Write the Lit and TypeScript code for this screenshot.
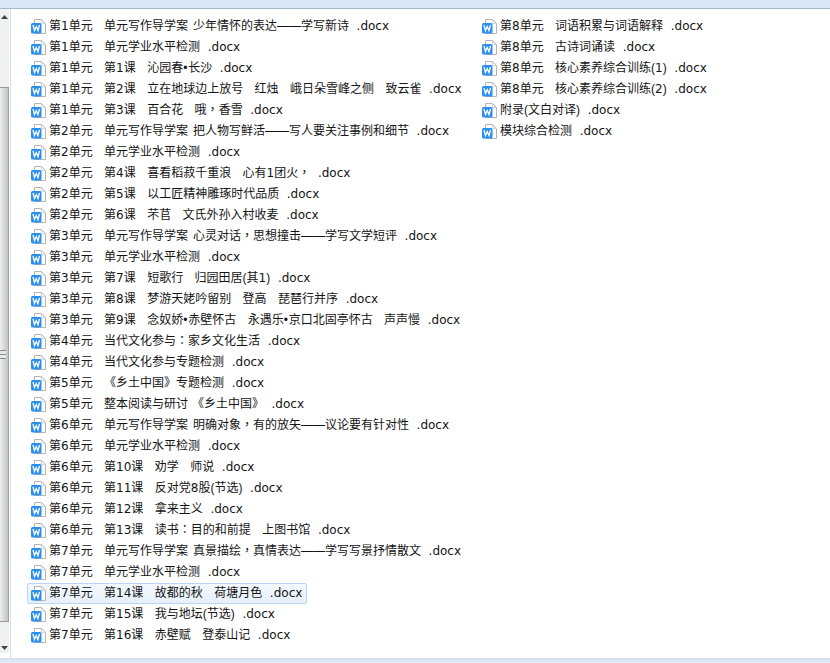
import { LitElement, html, css } from "lit";
import { customElement } from "lit/decorators.js";

const col1 = [
  "第1单元   单元写作导学案 少年情怀的表达——学写新诗  .docx",
  "第1单元   单元学业水平检测  .docx",
  "第1单元   第1课   沁园春•长沙  .docx",
  "第1单元   第2课   立在地球边上放号   红烛   峨日朵雪峰之侧   致云雀  .docx",
  "第1单元   第3课   百合花   哦，香雪  .docx",
  "第2单元   单元写作导学案 把人物写鲜活——写人要关注事例和细节  .docx",
  "第2单元   单元学业水平检测  .docx",
  "第2单元   第4课   喜看稻菽千重浪   心有1团火，  .docx",
  "第2单元   第5课   以工匠精神雕琢时代品质  .docx",
  "第2单元   第6课   芣苢   文氏外孙入村收麦  .docx",
  "第3单元   单元写作导学案 心灵对话，思想撞击——学写文学短评  .docx",
  "第3单元   单元学业水平检测  .docx",
  "第3单元   第7课   短歌行   归园田居(其1)  .docx",
  "第3单元   第8课   梦游天姥吟留别   登高   琵琶行并序  .docx",
  "第3单元   第9课   念奴娇•赤壁怀古   永遇乐•京口北固亭怀古   声声慢  .docx",
  "第4单元   当代文化参与：家乡文化生活  .docx",
  "第4单元   当代文化参与专题检测  .docx",
  "第5单元   《乡土中国》专题检测  .docx",
  "第5单元   整本阅读与研讨 《乡土中国》  .docx",
  "第6单元   单元写作导学案 明确对象，有的放矢——议论要有针对性  .docx",
  "第6单元   单元学业水平检测  .docx",
  "第6单元   第10课   劝学   师说  .docx",
  "第6单元   第11课   反对党8股(节选)  .docx",
  "第6单元   第12课   拿来主义  .docx",
  "第6单元   第13课   读书：目的和前提   上图书馆  .docx",
  "第7单元   单元写作导学案 真景描绘，真情表达——学写写景抒情散文  .docx",
  "第7单元   单元学业水平检测  .docx",
  "第7单元   第14课   故都的秋   荷塘月色  .docx",
  "第7单元   第15课   我与地坛(节选)  .docx",
  "第7单元   第16课   赤壁赋   登泰山记  .docx",
];
const col2 = [
  "第8单元   词语积累与词语解释  .docx",
  "第8单元   古诗词诵读  .docx",
  "第8单元   核心素养综合训练(1)  .docx",
  "第8单元   核心素养综合训练(2)  .docx",
  "附录(文白对译)  .docx",
  "模块综合检测  .docx",
];
const SELECTED = col1[27];

@customElement("app-root")
export class AppRoot extends LitElement {
  static styles = css`
    :host { display: flex; flex-direction: column; width: 830px; height: 663px; overflow: hidden; background: #fff;
      font: 12px/21px "DejaVu Sans", "Noto Sans CJK SC", sans-serif; color: #141414; }
    .top { height: 8px; flex: none; background: #dce7f5; border-bottom: 1px solid #a9b7cb; }
    .main { flex: 1; display: flex; min-height: 0; }
    .gutter { width: 10px; flex: none; border-right: 1px solid #d5dfe9; padding-bottom: 5px; display: flex; }
    .scroll { width: 9px; background: #f0f0f0; display: flex; flex-direction: column; }
    .arrow { height: 78px; flex: none; padding-top: 6px; box-sizing: border-box; }
    .thumb { flex: 1; background: linear-gradient(90deg, #eee, #c4c4c4); border-right: 1px solid #a0a0a0; border-top: 1px solid #999; border-bottom: 1px solid #999; display: flex; align-items: center; }
    .down { height: 31px; flex: none; display: flex; align-items: flex-end; padding-bottom: 2px; box-sizing: border-box; }
    .grip { width: 6px; height: 9px; background: repeating-linear-gradient(#8c8c8c 0 1px, #e8e8e8 1px 4px); }
    .list { flex: 1; display: flex; padding: 7px 0 0 16px; min-width: 0; }
    .col { width: 451px; flex: none; }
    .row { height: 21px; display: flex; align-items: center; white-space: pre; }
    .item { height: 19px; display: flex; align-items: center; gap: 3px; padding: 0 4px 0 3px; border: 1px solid transparent; border-radius: 2px; }
    .item.sel { background: linear-gradient(#f3f8fe, #e6f0fb); border-color: #b9d7f5; }
    .narrow { font-family: "Liberation Sans", sans-serif; line-height: 0; }
    .dot { font-family: "Liberation Sans", sans-serif; line-height: 0; letter-spacing: 0.8px; }
    .gap { letter-spacing: 1px; }
    .cjkp { font-family: "Noto Sans CJK TC", sans-serif; line-height: 0; }
    .bottom { height: 5px; flex: none; background: linear-gradient(#d4dfee, #e3ecf8); }
  `;

  icon() {
    return html`<svg width="15" height="15" viewBox="0 0 15 15" style="display:block;flex:none">
      <path d="M3.5.5H10.5L14.5 4.5V14.5H3.5Z" fill="#fff" stroke="#b4b4b4"/>
      <path d="M10.5.5V4.5H14.5" fill="none" stroke="#d4d4d4"/>
      <rect x="0" y="4" width="10.5" height="10.5" rx="1.5" fill="#2b8ff0"/>
      <path d="M2 6L3.5 11.5L5.25 7.5L7 11.5L8.5 6" fill="none" stroke="#fff" stroke-width="1.3"/>
    </svg>`;
  }

  text(t: string) {
    return t.split(/(•|[()—]+|[，：]|(?<=案) )/).map((p, i) => {
      if (i % 2 === 0) return p;
      const cls = /[，：]/.test(p) ? "cjkp" : p === "•" ? "dot" : p === " " ? "gap" : "narrow";
      return html`<span class="${cls}">${p}</span>`;
    });
  }

  column(items: string[]) {
    return html`<div class="col">${items.map(t => html`<div class="row"><div class="item ${t === SELECTED ? "sel" : ""}">${this.icon()}<span>${this.text(t)}</span></div></div>`)}</div>`;
  }

  render() {
    return html`
      <div class="top"></div>
      <div class="main">
        <div class="gutter"><div class="scroll">
          <div class="arrow"><svg width="9" height="5" viewBox="0 0 9 5" style="display:block"><path d="M4.5 0L8 4H1Z" fill="#444"/></svg></div>
          <div class="thumb"><div class="grip"></div></div>
          <div class="down"><svg width="9" height="5" viewBox="0 0 9 5" style="display:block"><path d="M4.5 4L8 0H1Z" fill="#444"/></svg></div>
        </div></div>
        <div class="list">${this.column(col1)}${this.column(col2)}</div>
      </div>
      <div class="bottom"></div>`;
  }
}
